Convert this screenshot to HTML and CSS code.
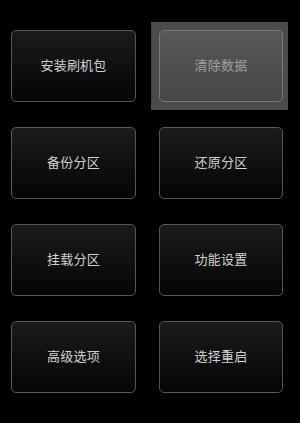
FILE: index.html
```html
<!DOCTYPE html>
<html lang="zh-CN">
  <head>
    <meta charset="UTF-8" />
    <title>Recovery</title>
    <link rel="stylesheet" href="styles.css">
  </head>

  <body>
    <div class="menu">
      <div class="cell">
        <div class="btn">安装刷机包</div>
      </div>
      <div class="cell selected">
        <div class="btn">清除数据</div>
      </div>
      <div class="cell">
        <div class="btn">备份分区</div>
      </div>
      <div class="cell">
        <div class="btn">还原分区</div>
      </div>
      <div class="cell">
        <div class="btn">挂载分区</div>
      </div>
      <div class="cell">
        <div class="btn">功能设置</div>
      </div>
      <div class="cell">
        <div class="btn">高级选项</div>
      </div>
      <div class="cell">
        <div class="btn">选择重启</div>
      </div>
    </div>
    <!--menu end-->
  </body>
</html>
```

FILE: styles.css
```css
body,
html {
  margin: 0;
  padding: 0;
  background: #000;
  font-family: "Noto Sans CJK SC", "DejaVu Sans", sans-serif;
}

body {
  width: 300px;
  height: 423px;
  overflow: hidden;
}

.menu {
  display: grid;
  grid-template-columns: 125px 124px;
  grid-auto-rows: 72px;
  column-gap: 23px;
  row-gap: 25px;
  padding: 30px 0 0 11px;
}

.cell {
  display: flex;
}

.btn {
  flex: 1;
  display: flex;
  align-items: center;
  justify-content: center;
  padding-bottom: 3px;
  border: 1px solid #575757;
  border-radius: 5px;
  background: linear-gradient(#1b1b1b, #050505);
  color: #d2d2d2;
  font-size: 13px;
  line-height: 1;
  letter-spacing: 0.2px;
}

.selected {
  margin: -8px -5px -8px -8px;
  padding: 8px 5px 8px 8px;
  background: #4b4b4b;
}

.selected .btn {
  border-color: #7a7a7a;
  background: linear-gradient(#585858, #474747);
  color: #a0a0a0;
}
```
